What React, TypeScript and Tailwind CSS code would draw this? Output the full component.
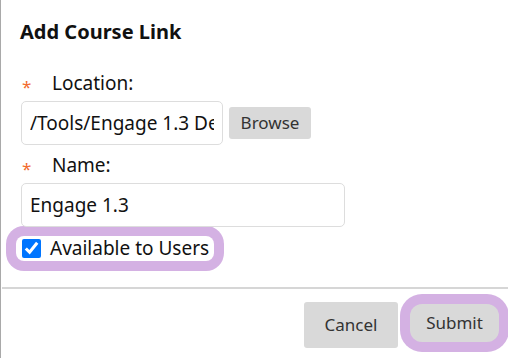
import React from 'react';

export default function App() {
  const [available, setAvailable] = React.useState(true);

  return (
    <div
      className="w-[508px] h-[358px] bg-white border-l border-[#a9a9a9] overflow-hidden text-[#111]"
      style={{ fontFamily: '"Noto Sans", "Open Sans", sans-serif' }}
    >
      <div className="pl-[19px] pt-[18px]">
        <h1 className="text-[20px] leading-[28px] font-bold">Add Course Link</h1>

        {/* Location */}
        <div className="mt-[24px] flex h-[26px] items-start text-[19px] leading-[26px]">
          <span className="mt-[8px] w-[32px] pl-[2px] text-[17px] leading-none text-[#f26b2e]">*</span>
          <span>Location:</span>
        </div>
        <div className="mt-[5px] flex items-center">
          <input
            type="text"
            defaultValue="/Tools/Engage 1.3 Demo Course"
            className="ml-[1px] h-[44px] w-[202px] rounded-[5px] border border-[#dddddd] px-[8px] text-[19px] outline-none"
          />
          <button
            type="button"
            className="ml-[6px] h-[32px] w-[82px] rounded-[3px] bg-[#d9d9d9] text-[17px] text-[#333]"
          >
            Browse
          </button>
        </div>

        {/* Name */}
        <div className="mt-[7px] flex h-[26px] items-start text-[19px] leading-[26px]">
          <span className="mt-[8px] w-[32px] pl-[2px] text-[17px] leading-none text-[#f26b2e]">*</span>
          <span>Name:</span>
        </div>
        <input
          type="text"
          defaultValue="Engage 1.3"
          className="mt-[5px] ml-[1px] h-[44px] w-[324px] rounded-[5px] border border-[#dddddd] px-[8px] text-[19px] outline-none"
        />

        {/* Available */}
        <label className="mt-[9px] ml-[-4px] flex h-[25px] w-[198px] items-center rounded-[8px] bg-white shadow-[0_0_0_10px_#d4b1e3]">
          <input
            type="checkbox"
            checked={available}
            onChange={(e) => setAvailable(e.target.checked)}
            className="ml-[6px] h-[19px] w-[19px] accent-[#0075ff]"
          />
          <span className="ml-[9px] text-[19px] leading-[25px]">Available to Users</span>
        </label>
      </div>

      <div className="mt-[26px] ml-[1px] h-[2px] bg-[#d6d6d6]" />

      <div className="mt-[13px] flex items-center justify-end pr-[9px]">
        <button
          type="button"
          className="h-[46px] w-[94px] rounded-[3px] bg-[#d9d9d9] text-[17px] text-[#333]"
        >
          Cancel
        </button>
        <button
          type="button"
          className="ml-[12px] mb-[4px] h-[38px] w-[89px] rounded-[12px] bg-[#d9d9d9] text-[17px] text-[#333] shadow-[0_0_0_10px_#d4b1e3]"
        >
          Submit
        </button>
      </div>
    </div>
  );
}
